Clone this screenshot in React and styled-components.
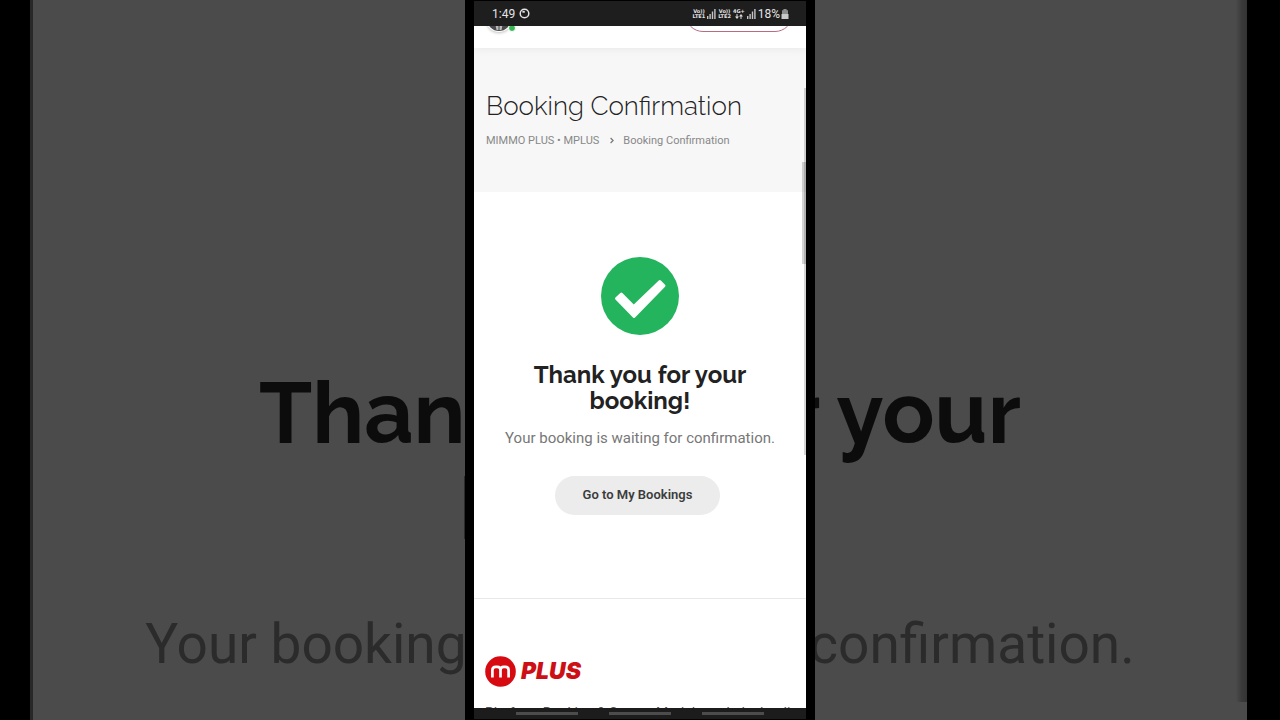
import React from "react";
import styled, { createGlobalStyle } from "styled-components";

const SignalIcon = () => (
  <svg width="9" height="10" viewBox="0 0 9 10" fill="#c4c4c4" aria-hidden="true">
    <rect x="0" y="7" width="1.4" height="3" />
    <rect x="2.4" y="5" width="1.4" height="5" />
    <rect x="4.8" y="2.5" width="1.4" height="7.5" />
    <rect x="7.2" y="0" width="1.4" height="10" />
  </svg>
);

const BatteryIcon = () => (
  <svg width="8" height="10" viewBox="0 0 8 10" aria-hidden="true">
    <path d="M2.4 0h3.2v1.2H7V7H1V1.2h1.4z" fill="#8d8d8d" />
    <path d="M.5 5h7v5h-7z" fill="#c9c9c9" />
  </svg>
);

const RecordIcon = () => (
  <svg width="11" height="11" viewBox="0 0 11 11" fill="none" stroke="#e4e4e4" aria-hidden="true">
    <circle cx="5.5" cy="5.5" r="4.3" strokeWidth="1.5" />
    <path d="M3.4 3.8h2.4" strokeWidth="1.8" />
  </svg>
);

const ArrowsIcon = () => (
  <svg width="8" height="5" viewBox="0 0 8 5" fill="#dcdcdc" aria-hidden="true">
    <path d="M1.5 0h1v2.5H4L2 5 0 2.5h1.5zM6 0l2 2.5H6.5V5h-1V2.5H4z" />
  </svg>
);

const CheckIcon = () => (
  <svg width="78" height="78" viewBox="0 0 78 78" aria-hidden="true">
    <circle cx="39" cy="39" r="39" fill="#23b45d" />
    <path
      d="M15.5 41.5L20.3 37L32.7 49.5L58.8 24.500L63 28.700L33 59.500z"
      fill="#fff"
      stroke="#fff"
      strokeWidth="3"
      strokeLinejoin="round"
    />
  </svg>
);

const LogoMark = () => (
  <svg width="31" height="31" viewBox="0 0 31 31" aria-hidden="true">
    <circle cx="15.5" cy="15.5" r="15.3" fill="#d60a10" />
    <path
      d="M7.4 21.5v-7.5q0-3.2 3.3-3.2h1.7q3.1 0 3.1 3.2v7.5M15.5 14q0-3.2 3.1-3.2h1.7q3.3 0 3.3 3.2v7.5"
      fill="none"
      stroke="#fff"
      strokeWidth="2.7"
    />
  </svg>
);

const Avatar = () => (
  <svg width="26" height="26" viewBox="0 0 26 26" aria-hidden="true">
    <circle cx="13" cy="13" r="12" fill="#4a4a4a" />
    <path d="M9.5 19q3.5 2 7 0l-1 5h-5z" fill="#bbb" />
    <path d="M13 19v5" stroke="#4a4a4a" />
  </svg>
);

export default function App() {
  return (
    <Stage>
      <GlobalStyle />
      <Backdrop aria-hidden="true">
        <BackdropTitle>
          Thank you for your
          <br />
          booking!
        </BackdropTitle>
        <BackdropText>Your booking is waiting for confirmation.</BackdropText>
      </Backdrop>
      <Phone>
        <StatusBar>
          <StatusGroup $gap={4}>
            <StatusText>1:49</StatusText>
            <RecordIcon />
          </StatusGroup>
          <StatusGroup $gap={2}>
            <Carrier>
              <span>Vo))</span>
              <span>LTE1</span>
            </Carrier>
            <SignalIcon />
            <Carrier>
              <span>Vo))</span>
              <span>LTE2</span>
            </Carrier>
            <Carrier>
              <span>4G+</span>
              <ArrowsIcon />
            </Carrier>
            <SignalIcon />
            <StatusGroup $gap={1}>
              <StatusText>18%</StatusText>
              <BatteryIcon />
            </StatusGroup>
          </StatusGroup>
        </StatusBar>
        <Page>
          <SiteHeader>
            <Profile>
              <Avatar />
              <Online />
            </Profile>
            <HeaderButton type="button" aria-label="Menu" />
          </SiteHeader>
          <TitleBar>
            <PageTitle>Booking Confirmation</PageTitle>
            <Breadcrumbs>
              <Crumb href="#">MIMMO PLUS • MPLUS</Crumb>
              <svg width="4" height="7" viewBox="0 0 4 7" fill="none" stroke="#777" strokeWidth="1.2" aria-hidden="true">
                <path d="M.6 1l2.5 2.5L.6 6" />
              </svg>
              <span>Booking Confirmation</span>
            </Breadcrumbs>
          </TitleBar>
          <Confirmation>
            <CheckIcon />
            <Thanks>Thank you for your booking!</Thanks>
            <Message>Your booking is waiting for confirmation.</Message>
            <BookingsLink href="#">Go to My Bookings</BookingsLink>
          </Confirmation>
          <Footer>
            <Logo>
              <LogoMark />
              PLUS
            </Logo>
            <About>Platform Booking &amp; Semua Modul untuk dealer di</About>
          </Footer>
          <Scrollbar $top={62} $height={367} $width={2} />
          <Scrollbar $top={136} $height={102} $width={4} />
        </Page>
        <NavBar>
          <NavHandle />
          <NavHandle />
          <NavHandle />
        </NavBar>
      </Phone>
    </Stage>
  );
}

const GlobalStyle = createGlobalStyle`
  * {
    box-sizing: border-box;
  }
  body {
    margin: 0;
    background: #000;
    font-family: Roboto, "Liberation Sans", sans-serif;
  }
`;

const Stage = styled.div`
  position: relative;
  display: flex;
  justify-content: center;
  height: 100vh;
  overflow: hidden;
`;

const Backdrop = styled.div`
  position: absolute;
  inset: 0 33px 0 30px;
  display: flex;
  flex-direction: column;
  align-items: center;
  padding-top: 365px;
  background: #4b4b4b;
  border-left: 3px solid #282828;
  white-space: nowrap;
  &::after {
    content: "";
    position: absolute;
    top: 0;
    right: 0;
    bottom: 18px;
    width: 11px;
    background: linear-gradient(90deg, #4b4b4b, #3a3a3a 50%, #333);
  }
`;

const BackdropTitle = styled.div`
  color: #0c0c0c;
  font: 700 86px/96px Raleway, Lato, sans-serif;
  text-align: center;
`;

const BackdropText = styled.div`
  margin-top: 43px;
  color: #2b2b2b;
  font-size: 55px;
  line-height: 88px;
`;

const Phone = styled.div`
  position: relative;
  display: flex;
  flex-direction: column;
  width: 100%;
  max-width: 350px;
  padding: 1px 9px;
  background: #000;
`;

const StatusBar = styled.div`
  display: flex;
  align-items: center;
  justify-content: space-between;
  flex: none;
  height: 25px;
  padding: 0 17px 0 18px;
  background: #1e1e1e;
  color: #e4e4e4;
`;

const StatusGroup = styled.div`
  display: flex;
  align-items: center;
  gap: ${(props) => props.$gap}px;
`;

const StatusText = styled.span`
  font-size: 12px;
  line-height: 16px;
`;

const Carrier = styled.span`
  display: flex;
  flex-direction: column;
  align-items: center;
  font-size: 5px;
  font-family: "DejaVu Sans", sans-serif;
  font-weight: 700;
  line-height: 5px;
`;

const Page = styled.div`
  position: relative;
  display: flex;
  flex-direction: column;
  flex: 1;
  min-height: 0;
  overflow: hidden;
  background: #fff;
`;

const SiteHeader = styled.header`
  display: flex;
  align-items: flex-end;
  justify-content: space-between;
  flex: none;
  height: 22px;
  padding: 0 13px 16px 12px;
  z-index: 1;
  background: #fff;
  box-shadow: 0 0 10px rgba(0, 0, 0, 0.08);
`;

const Profile = styled.div`
  position: relative;
  display: flex;
  border-radius: 50%;
  box-shadow: 0 1px 3px rgba(0, 0, 0, 0.25);
`;

const Online = styled.span`
  position: absolute;
  right: -4px;
  bottom: 0;
  width: 8px;
  height: 8px;
  border: 1px solid #fff;
  border-radius: 50%;
  background: #38b653;
`;

const HeaderButton = styled.button`
  width: 108px;
  height: 36px;
  flex: none;
  border: 1px solid #b96b7f;
  border-radius: 18px;
  background: #fff;
`;

const TitleBar = styled.section`
  flex: none;
  padding: 41px 12px 43px;
  background: #f7f7f7;
`;

const PageTitle = styled.h1`
  margin: 0;
  color: #222;
  font: 300 26px/34px Raleway, Lato, sans-serif;
  white-space: nowrap;
`;

const Breadcrumbs = styled.nav`
  display: flex;
  align-items: center;
  margin-top: 9px;
  color: #888;
  font-size: 11px;
  line-height: 17px;
  svg {
    margin: 0 9px 0 11px;
  }
`;

const Crumb = styled.a`
  color: inherit;
  text-decoration: none;
`;

const Confirmation = styled.main`
  display: flex;
  flex-direction: column;
  align-items: center;
  flex: none;
  padding: 65px 12px 83px;
  border-bottom: 1px solid #e8e8e8;
  text-align: center;
`;

const Thanks = styled.h2`
  max-width: 240px;
  margin: 27px 0 0;
  color: #222;
  font: 700 24px/26px Raleway, Lato, sans-serif;
`;

const Message = styled.p`
  margin: 12px 0 0;
  color: #777;
  font-size: 15px;
  line-height: 24px;
`;

const BookingsLink = styled.a`
  margin: 26px 5px 0 0;
  padding: 0 28px 2px;
  border-radius: 20px;
  background: #ececec;
  color: #3c3c3c;
  font-size: 13px;
  font-weight: 600;
  line-height: 37px;
  text-decoration: none;
`;

const Footer = styled.footer`
  padding: 57px 11px 0;
`;

const Logo = styled.div`
  display: flex;
  align-items: center;
  gap: 5px;
  color: #cc1016;
  font: italic 900 23px/31px Inter, Lato, sans-serif;
`;

const About = styled.p`
  margin: 16px 0 0;
  color: #555;
  font-size: 14px;
  line-height: 20px;
  white-space: nowrap;
`;

const Scrollbar = styled.div`
  position: absolute;
  top: ${(props) => props.$top}px;
  right: 0;
  width: ${(props) => props.$width}px;
  height: ${(props) => props.$height}px;
  background: rgba(0, 0, 0, 0.17);
`;

const NavBar = styled.div`
  display: flex;
  align-items: center;
  justify-content: center;
  gap: 31px;
  flex: none;
  height: 11px;
  background: #1c1c1c;
`;

const NavHandle = styled.span`
  width: 62px;
  height: 3px;
  background: #4c4c4c;
`;
